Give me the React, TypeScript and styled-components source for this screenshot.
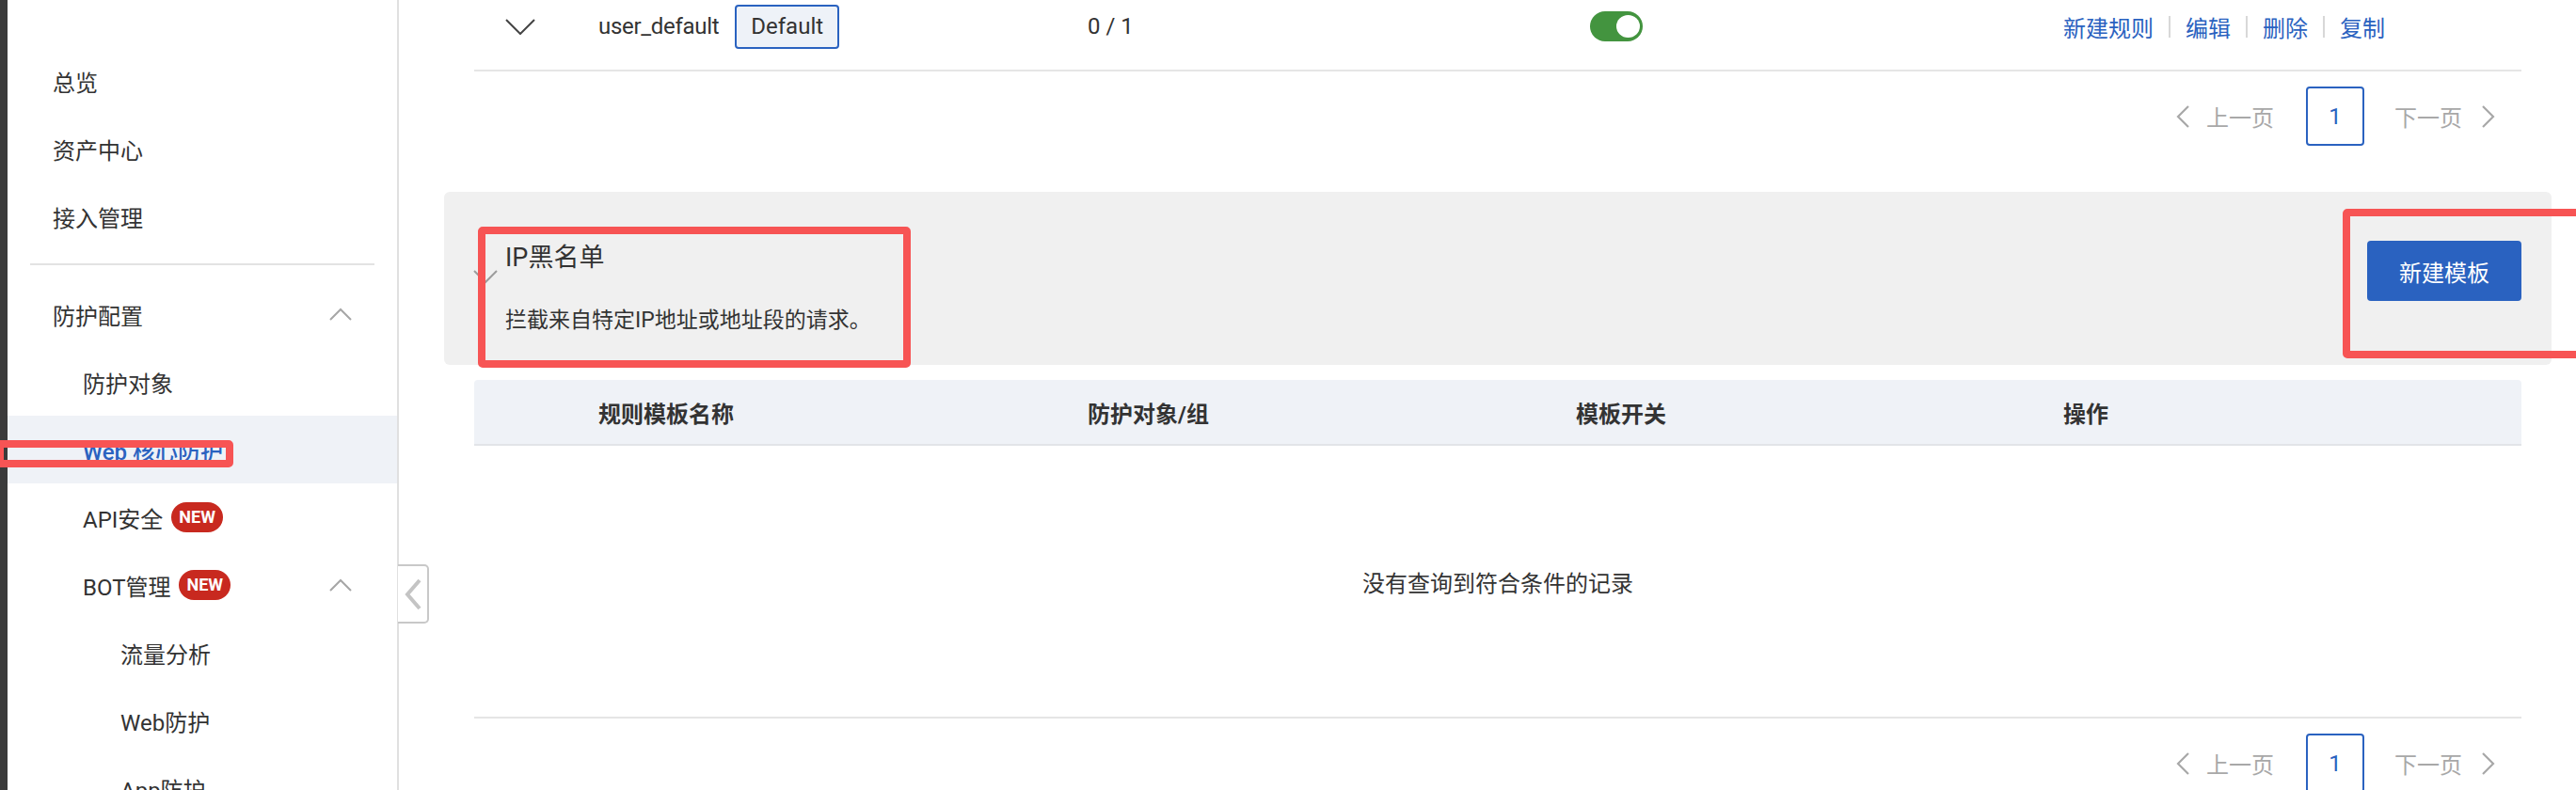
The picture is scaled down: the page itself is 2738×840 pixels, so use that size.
import React from "react";
import styled, { createGlobalStyle } from "styled-components";

const BLUE = "#2a62c0";
const RED = "#f75454";

const GlobalStyle = createGlobalStyle`
  html, body { margin: 0; padding: 0; background: #fff; }
  body {
    font-family: Roboto, "Noto Sans CJK SC", "Noto Sans", sans-serif;
    color: #333;
    overflow: hidden;
  }
  * { box-sizing: border-box; }
`;

const Page = styled.div`
  position: relative;
  display: flex;
  width: 2738px;
  height: 840px;
  overflow: hidden;
  background: #fff;
`;

const Strip = styled.div`
  flex: none;
  width: 8px;
  background: #3b3b3b;
`;

const Sidebar = styled.nav`
  flex: none;
  width: 416px;
  padding-top: 50px;
  border-right: 2px solid #e0e0e0;
  display: flex;
  flex-direction: column;
`;

const NavItem = styled.div<{ $level: number; $active?: boolean }>`
  flex: none;
  height: 72px;
  display: flex;
  align-items: center;
  padding-left: ${(p) => (p.$level === 1 ? 48 : p.$level === 2 ? 80 : 120)}px;
  padding-right: 48px;
  font-size: 24px;
  color: ${(p) => (p.$active ? BLUE : "#333")};
  font-weight: ${(p) => (p.$active ? 500 : 400)};
  background: ${(p) => (p.$active ? "#eff2f7" : "transparent")};
  white-space: nowrap;
`;

const NavLabel = styled.span`
  flex: 1;
  display: flex;
  align-items: center;
`;

const NewBadge = styled.span`
  margin-left: 9px;
  height: 32px;
  padding: 0 8px;
  border-radius: 16px;
  background: #c8291f;
  color: #fff;
  font-size: 18px;
  font-weight: 700;
  display: inline-flex;
  align-items: center;
  line-height: 1;
`;

const NavDivider = styled.div`
  flex: none;
  height: 2px;
  margin: 14px 24px 16px;
  background: #e3e3e3;
`;

const Main = styled.main`
  position: relative;
  flex: 1;
  min-width: 0;
  padding: 0 58px 0 80px;
  display: flex;
  flex-direction: column;
`;

const CollapseTab = styled.div`
  position: absolute;
  left: -1px;
  top: 600px;
  width: 33px;
  height: 63px;
  border: 2px solid #c8c8c8;
  border-left: none;
  border-radius: 0 5px 5px 0;
  background: #fff;
  display: flex;
  align-items: center;
  justify-content: center;
`;

const Row = styled.div`
  display: grid;
  grid-template-columns: 132px 520px 519px 518px 1fr;
  align-items: center;
  font-size: 24px;
`;

const TopRow = styled(Row)`
  flex: none;
  margin-top: -18px;
  height: 94px;
  border-bottom: 2px solid #e5e5e5;
`;

const ExpandCell = styled.div`
  padding-left: 33px;
  display: flex;
  align-items: center;
`;

const NameCell = styled.div`
  display: flex;
  align-items: center;
  gap: 17px;
`;

const RuleName = styled.span`
  letter-spacing: -0.3px;
`;

const DefaultTag = styled.span`
  height: 47px;
  padding: 0 15px;
  border: 2px solid ${BLUE};
  border-radius: 4px;
  background: #eef2f8;
  display: inline-flex;
  align-items: center;
  color: #333;
`;

const Toggle = styled.span`
  position: relative;
  margin-left: 15px;
  width: 56px;
  height: 32px;
  border-radius: 16px;
  background: #43943f;
  display: block;
  &::after {
    content: "";
    position: absolute;
    top: 4px;
    right: 3px;
    width: 25px;
    height: 24px;
    border-radius: 50%;
    background: #fff;
  }
`;

const Actions = styled.div`
  display: flex;
  align-items: center;
`;

const ActionLink = styled.a`
  color: ${BLUE};
  text-decoration: none;
  cursor: pointer;
`;

const ActionSep = styled.span`
  width: 2px;
  height: 23px;
  margin: 0 16px;
  background: #d8d8d8;
`;

const Pager = styled.div`
  flex: none;
  margin-top: 16px;
  height: 63px;
  padding-right: 28px;
  display: flex;
  align-items: center;
  justify-content: flex-end;
  font-size: 24px;
  color: #a8a8a8;
`;

const PagerStep = styled.span<{ $side: "prev" | "next" }>`
  display: flex;
  align-items: center;
  gap: ${(p) => (p.$side === "prev" ? 18 : 21)}px;
  margin: ${(p) => (p.$side === "prev" ? "0 34px 0 0" : "0 0 0 32px")};
`;

const PageBox = styled.span`
  width: 62px;
  height: 63px;
  border: 2px solid ${BLUE};
  border-radius: 4px;
  color: ${BLUE};
  display: flex;
  align-items: center;
  justify-content: center;
`;

const Panel = styled.section`
  flex: none;
  margin: 49px -32px 0;
  height: 184px;
  padding: 0 32px 0 30px;
  border-radius: 6px;
  background: #f0f0f0;
  display: flex;
  align-items: flex-start;
`;

const PanelChevron = styled.svg`
  flex: none;
  margin-top: 82px;
`;

const PanelText = styled.div`
  margin-left: 7px;
  padding-top: 53px;
`;

const PanelTitle = styled.h2`
  margin: 0;
  font-size: 27px;
  line-height: 34px;
  font-weight: 400;
  color: #333;
`;

const PanelDesc = styled.p`
  margin: 34px 0 0;
  font-size: 23px;
  line-height: 32px;
  color: #333;
`;

const PrimaryButton = styled.button`
  margin: 52px 0 0 auto;
  width: 164px;
  height: 64px;
  border: none;
  border-radius: 4px;
  background: ${BLUE};
  color: #fff;
  font-family: inherit;
  font-size: 24px;
`;

const HeadRow = styled(Row)`
  flex: none;
  margin-top: 16px;
  height: 70px;
  background: #eff2f7;
  border-bottom: 2px solid #e2e4e8;
  border-radius: 4px 4px 0 0;
  font-weight: 700;
  color: #333;
`;

const EmptyBody = styled.div`
  flex: none;
  height: 290px;
  border-bottom: 2px solid #e5e5e5;
  display: flex;
  align-items: center;
  justify-content: center;
  font-size: 24px;
  color: #333;
`;

const Annotation = styled.div<{ $x: number; $y: number; $w: number; $h: number }>`
  position: absolute;
  left: ${(p) => p.$x}px;
  top: ${(p) => p.$y}px;
  width: ${(p) => p.$w}px;
  height: ${(p) => p.$h}px;
  border: 8px solid ${RED};
  border-radius: 5px;
  pointer-events: none;
`;

const ChevronUp = () => (
  <svg width="24" height="14" viewBox="0 0 24 14">
    <polyline points="1,13 12,2 23,13" fill="none" stroke="#a6a6a6" strokeWidth="2" />
  </svg>
);

const ChevronDown = () => (
  <svg width="32" height="17" viewBox="0 0 32 17">
    <polyline points="1,1 16,16 31,1" fill="none" stroke="#444" strokeWidth="2" />
  </svg>
);

const PagerArrow = ({ dir }: { dir: "left" | "right" }) => (
  <svg width="14" height="24" viewBox="0 0 14 24">
    <polyline
      points={dir === "left" ? "13,1 2,12 13,23" : "1,1 12,12 1,23"}
      fill="none"
      stroke="#a8a8a8"
      strokeWidth="2.2"
    />
  </svg>
);

const Pagination = () => (
  <Pager>
    <PagerStep $side="prev">
      <PagerArrow dir="left" />
      <span>上一页</span>
    </PagerStep>
    <PageBox>1</PageBox>
    <PagerStep $side="next">
      <span>下一页</span>
      <PagerArrow dir="right" />
    </PagerStep>
  </Pager>
);

export default function App() {
  return (
    <>
      <GlobalStyle />
      <Page>
        <Strip />
        <Sidebar>
          <NavItem $level={1}>总览</NavItem>
          <NavItem $level={1}>资产中心</NavItem>
          <NavItem $level={1}>接入管理</NavItem>
          <NavDivider />
          <NavItem $level={1}>
            <NavLabel>防护配置</NavLabel>
            <ChevronUp />
          </NavItem>
          <NavItem $level={2}>防护对象</NavItem>
          <NavItem $level={2} $active>
            Web 核心防护
          </NavItem>
          <NavItem $level={2}>
            <NavLabel>
              API安全<NewBadge>NEW</NewBadge>
            </NavLabel>
          </NavItem>
          <NavItem $level={2}>
            <NavLabel>
              BOT管理<NewBadge>NEW</NewBadge>
            </NavLabel>
            <ChevronUp />
          </NavItem>
          <NavItem $level={3}>流量分析</NavItem>
          <NavItem $level={3}>Web防护</NavItem>
          <NavItem $level={3}>App防护</NavItem>
        </Sidebar>

        <Main>
          <CollapseTab>
            <svg width="20" height="34" viewBox="0 0 20 34">
              <polyline points="17,2 4,17 17,32" fill="none" stroke="#c4c4c4" strokeWidth="4" />
            </svg>
          </CollapseTab>

          <TopRow>
            <ExpandCell>
              <ChevronDown />
            </ExpandCell>
            <NameCell>
              <RuleName>user_default</RuleName>
              <DefaultTag>Default</DefaultTag>
            </NameCell>
            <div>0 / 1</div>
            <div>
              <Toggle />
            </div>
            <Actions>
              <ActionLink>新建规则</ActionLink>
              <ActionSep />
              <ActionLink>编辑</ActionLink>
              <ActionSep />
              <ActionLink>删除</ActionLink>
              <ActionSep />
              <ActionLink>复制</ActionLink>
            </Actions>
          </TopRow>

          <Pagination />

          <Panel>
            <PanelChevron width="28" height="16" viewBox="0 0 28 16">
              <polyline points="2,2 14,14 26,2" fill="none" stroke="#9c9c9c" strokeWidth="2" />
            </PanelChevron>
            <PanelText>
              <PanelTitle>IP黑名单</PanelTitle>
              <PanelDesc>拦截来自特定IP地址或地址段的请求。</PanelDesc>
            </PanelText>
            <PrimaryButton>新建模板</PrimaryButton>
          </Panel>

          <HeadRow>
            <div />
            <div>规则模板名称</div>
            <div>防护对象/组</div>
            <div>模板开关</div>
            <div>操作</div>
          </HeadRow>

          <EmptyBody>没有查询到符合条件的记录</EmptyBody>

          <Pagination />
        </Main>

        <Annotation $x={508} $y={241} $w={460} $h={150} />
        <Annotation $x={2490} $y={222} $w={270} $h={159} />
        <Annotation $x={-4} $y={468} $w={252} $h={29} />
      </Page>
    </>
  );
}
